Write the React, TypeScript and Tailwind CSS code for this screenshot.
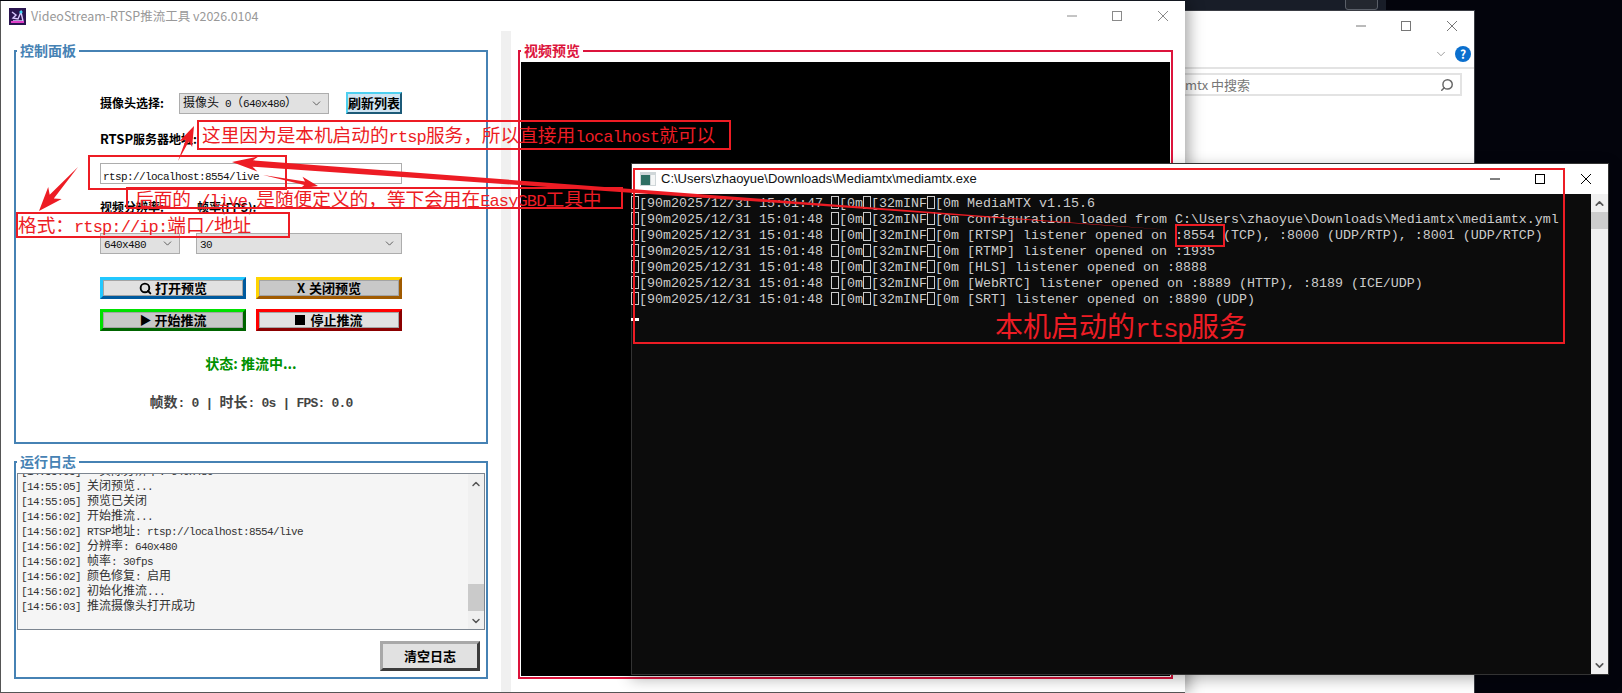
import { Search, ChevronDown, ChevronUp } from 'lucide-react'

const sans = "font-['Noto_Sans_CJK_SC','Liberation_Sans',sans-serif]"

const logLines = [
  '[14:55:05]   实际分辨率: 640x480',
  '[14:55:05] 关闭预览...',
  '[14:55:05] 预览已关闭',
  '[14:56:02] 开始推流...',
  '[14:56:02] RTSP地址: rtsp://localhost:8554/live',
  '[14:56:02] 分辨率: 640x480',
  '[14:56:02] 帧率: 30fps',
  '[14:56:02] 颜色修复: 启用',
  '[14:56:02] 初始化推流...',
  '[14:56:03] 推流摄像头打开成功',
]

const consoleLines = [
  ['2025/12/31 15:01:47', 'MediaMTX v1.15.6'],
  ['2025/12/31 15:01:48', 'configuration loaded from C:\\Users\\zhaoyue\\Downloads\\Mediamtx\\mediamtx.yml'],
  ['2025/12/31 15:01:48', '[RTSP] listener opened on :8554 (TCP), :8000 (UDP/RTP), :8001 (UDP/RTCP)'],
  ['2025/12/31 15:01:48', '[RTMP] listener opened on :1935'],
  ['2025/12/31 15:01:48', '[HLS] listener opened on :8888'],
  ['2025/12/31 15:01:48', '[WebRTC] listener opened on :8889 (HTTP), :8189 (ICE/UDP)'],
  ['2025/12/31 15:01:48', '[SRT] listener opened on :8890 (UDP)'],
]

// latin runs get a mono face so they sit at half the width of the CJK cells
function Mixed({ text, latin }: { text: string; latin: string }) {
  const parts = text.split(/([\x00-\x7f]+)/).filter(Boolean)
  return (
    <>
      {parts.map((p, i) =>
        /^[\x00-\x7f]/.test(p) ? (
          <span key={i} className={latin}>
            {p}
          </span>
        ) : (
          <span key={i}>{p}</span>
        ),
      )}
    </>
  )
}

const mono12 = "font-['Liberation_Mono',monospace] text-[11px] tracking-[-0.6px]"
const mono14 = "font-['Liberation_Mono',monospace] text-[13px] tracking-[-0.8px]"
const mono19 = "font-['Liberation_Mono',monospace] text-[17px] tracking-[-0.87px]"
const mono28 = "font-['Liberation_Mono',monospace] text-[26px] tracking-[-1.6px]"

function Combo({ text, className }: { text: string; className: string }) {
  return (
    <div className={`flex items-center justify-between bg-[#e1e1e1] border border-[#adadad] pl-[3px] pr-[5px] text-[12px] text-[#111] ${className}`}>
      <span className="whitespace-pre">
        <Mixed text={text} latin={mono12} />
      </span>
      <ChevronDown size={13} strokeWidth={1.5} className="text-[#444]" />
    </div>
  )
}

function Bevel({ children, className }: { children: React.ReactNode; className: string }) {
  return (
    <div className={`flex items-center justify-center gap-[3px] border-[3px] h-[22px] shadow-[inset_0_0_0_1px_#a4a4a4] text-[13px] font-bold text-black ${className}`}>
      {children}
    </div>
  )
}

function GroupLabel({ text, className }: { text: string; className: string }) {
  return <div className={`absolute left-px -top-[11px] bg-white px-[3px] h-[18px] leading-[18px] text-[14px] font-bold ${className}`}>{text}</div>
}

function WinControls({ tone, className }: { tone: string; className: string }) {
  return (
    <div className={`flex items-center ${className}`}>
      <svg width="12" height="12" viewBox="0 0 12 12" className={tone}>
        <path d="M1 6h10" stroke="currentColor" fill="none" />
      </svg>
      <svg width="12" height="12" viewBox="0 0 12 12" className={`ml-[33px] ${tone}`}>
        <rect x="1.5" y="1.5" width="9" height="9" stroke="currentColor" fill="none" />
      </svg>
      <svg width="12" height="12" viewBox="0 0 12 12" className={`ml-[34px] ${tone}`}>
        <path d="M1 1l10 10M11 1L1 11" stroke="currentColor" fill="none" />
      </svg>
    </div>
  )
}

function arrow(x1: number, y1: number, x2: number, y2: number, head: number, headW: number, shaft: number) {
  const len = Math.hypot(x2 - x1, y2 - y1)
  const ux = (x2 - x1) / len
  const uy = (y2 - y1) / len
  const nx = -uy
  const ny = ux
  const bx = x2 - ux * head
  const by = y2 - uy * head
  const nb = x2 - ux * head * 0.8
  const mb = y2 - uy * head * 0.8
  const pts = [
    [x1, y1],
    [nb + (nx * shaft) / 2, mb + (ny * shaft) / 2],
    [bx + (nx * headW) / 2, by + (ny * headW) / 2],
    [x2, y2],
    [bx - (nx * headW) / 2, by - (ny * headW) / 2],
    [nb - (nx * shaft) / 2, mb - (ny * shaft) / 2],
  ]
  return pts.map((p) => p.map((v) => v.toFixed(1)).join(',')).join(' ')
}

function Annotations() {
  const box = 'absolute border-[2px] border-[#ed1c24]'
  const note = 'absolute whitespace-pre text-[#ed1c24] text-[18.67px] leading-[24px]'
  return (
    <>
      <div className={`${box} left-[197px] top-[120px] w-[534px] h-[30px]`} />
      <div className={`${note} left-[202px] top-[122px]`}>
        <Mixed text="这里因为是本机启动的rtsp服务，所以直接用localhost就可以" latin={mono19} />
      </div>

      <div className={`${box} left-[88px] top-[155px] w-[199px] h-[35px]`} />

      <div className={`${box} left-[126px] top-[187px] w-[497px] h-[22px]`} />
      <div className={`${note} left-[135px] top-[186px]`}>
        <Mixed text="后面的 /live 是随便定义的，等下会用在EasyGBD工具中" latin={mono19} />
      </div>

      <div className={`${box} left-[16px] top-[212px] w-[274px] h-[26px]`} />
      <div className={`${note} left-[18px] top-[212px]`}>
        <Mixed text="格式：rtsp://ip:端口/地址" latin={mono19} />
      </div>

      <div className={`${box} left-[633px] top-[168px] w-[932px] h-[176px]`} />
      <div className={`${box} left-[1175px] top-[224px] w-[50px] h-[23px]`} />
      <div className="absolute left-[995px] top-[307px] whitespace-pre text-[#ed1c24] text-[28px] leading-[36px]">
        <Mixed text="本机启动的rtsp服务" latin={mono28} />
      </div>

      <svg width="1622" height="693" className="absolute left-0 top-0 pointer-events-none">
        <g fill="#ed1c24">
          <polygon points={arrow(178, 161, 194, 126, 20, 14, 3.5)} />
          <polygon points={arrow(78, 167, 39, 211, 24, 18, 5.5)} />
          <polygon points={arrow(1171, 230, 232, 162, 26, 15, 6.5)} />
          <polygon points={arrow(263, 175, 318, 186, 17, 12, 3.5)} />
        </g>
      </svg>
    </>
  )
}

function ConsoleBox() {
  return <span className="inline-block w-[8px] h-[13px] border border-[#ccc] align-[-2px]" />
}

export default function App() {
  return (
    <div className={`relative w-[1622px] h-[693px] overflow-hidden bg-[#03040c] ${sans}`}>
      {/* desktop strip behind the windows */}
      <div className="absolute left-[1000px] top-0 w-[386px] h-[12px] bg-[#181d28]" />
      <div className="absolute left-[1345px] -top-[6px] w-[33px] h-[16px] rounded-[3px] border border-[#5a5f68] bg-[#23272f]" />

      {/* explorer window */}
      <div className="absolute left-[1100px] top-[10px] w-[375px] h-[684px] bg-white border-r border-t border-[#3a3d44]">
        <div className="flex justify-end pt-[9px] pr-[16px]">
          <WinControls tone="text-[#777]" className="" />
        </div>
        <div className="flex justify-end items-center mt-[12px] pr-[3px] h-[20px] gap-[7px]">
          <ChevronDown size={14} strokeWidth={1.4} className="text-[#888]" />
          <div className="w-[16px] h-[16px] rounded-full bg-[#0a6fce] text-white text-[12px] font-bold leading-[16px] text-center">?</div>
        </div>
        <div className="mt-[3px] h-[2px] bg-[#e3e3e3]" />
        <div className="flex items-center justify-between mt-[4px] ml-[85px] mr-[12px] h-[23px] border-2 border-l-0 border-[#e3e3e3] pr-[6px]">
          <span className="text-[13px] text-[#777] whitespace-pre">mtx 中搜索</span>
          <Search size={14} strokeWidth={2.5} className="text-[#666] -scale-x-100" />
        </div>
      </div>

      {/* main app window */}
      <div className="absolute left-0 top-[1px] w-[1185px] h-[692px] flex flex-col bg-white border-l border-b border-[#555] shadow-[4px_0_14px_rgba(0,0,0,0.35)]">
        <div className="flex items-center h-[30px] pl-[8px] shrink-0">
          <svg width="17" height="17" viewBox="0 0 17 17">
            <rect width="17" height="17" fill="#2a1550" />
            <path d="M3 4l4 3-3 3 5 1 3-7 2 9H4" stroke="#d9c8ff" strokeWidth="1.4" fill="none" />
            <circle cx="12" cy="4" r="1.6" fill="#41d9f5" />
            <rect x="2" y="13" width="13" height="2" fill="#e040c8" />
          </svg>
          <span className="ml-[5px] text-[12.5px] text-[#999]">VideoStream-RTSP推流工具 v2026.0104</span>
          <WinControls tone="text-[#8a8a8a]" className="ml-auto mr-[16px]" />
        </div>

        <div className="flex flex-1 min-h-0">
          {/* left column */}
          <div className="ml-[13px] w-[474px] pt-[19px] flex flex-col gap-[17px]">
            <div className="relative h-[394px] border-2 border-[#4682b4] pl-[84px]">
              <GroupLabel text="控制面板" className="text-[#4682b4]" />
              <div className="w-[302px] pt-[40px]">
                <div className="flex items-center h-[22px]">
                  <span className="w-[79px] text-[12px] font-bold text-black">摄像头选择:</span>
                  <Combo text="摄像头 0（640x480）" className="w-[150px] h-[21px]" />
                  <div className="ml-[17px] w-[56px] h-[22px] flex items-center justify-center border-[2px] border-t-[#4fd0f0] border-l-[#4fd0f0] border-b-[#1c5a78] border-r-[#1c5a78] bg-[#cfe4f2] text-[13px] font-bold text-black">
                    刷新列表
                  </div>
                </div>
                <div className="mt-[16px] h-[18px] leading-[18px] text-[12px] font-bold text-black">
                  <span className="text-[13px]">RTSP</span>服务器地址:
                </div>
                <div className="mt-[15px] h-[21px] border border-[#adadad] bg-white pl-[2px] leading-[19px] text-[#111]">
                  <span className={mono12}>rtsp://localhost:8554/live</span>
                </div>
                <div className="mt-[14px] flex h-[18px] leading-[18px] text-[12px] font-bold text-black">
                  <span className="w-[97px]">视频分辨率:</span>
                  <span>帧率(FPS):</span>
                </div>
                <div className="mt-[17px] flex gap-[16px]">
                  <Combo text="640x480" className="w-[80px] h-[21px]" />
                  <Combo text="30" className="w-[206px] h-[21px]" />
                </div>
                <div className="mt-[23px] grid grid-cols-2 gap-x-[10px] gap-y-[10px]">
                  <Bevel className="border-t-[#22c8ff] border-l-[#22c8ff] border-b-[#005a9e] border-r-[#005a9e] bg-[#e1e1e1]">
                    <Search size={13} strokeWidth={3.5} /> 打开预览
                  </Bevel>
                  <Bevel className="border-t-[#ffd400] border-l-[#ffd400] border-b-[#a05a00] border-r-[#a05a00] bg-[#c8c8c8]">
                    <span className="mr-[1px]">X</span>关闭预览
                  </Bevel>
                  <Bevel className="border-t-[#00e000] border-l-[#00e000] border-b-[#006400] border-r-[#006400] bg-[#c8c8c8]">
                    <span className="text-[12px]">▶</span>开始推流
                  </Bevel>
                  <Bevel className="border-t-[#ff0000] border-l-[#ff0000] border-b-[#8b0000] border-r-[#8b0000] bg-[#e1e1e1]">
                    <span className="w-[10px] h-[10px] bg-black mr-[2px]" />停止推流
                  </Bevel>
                </div>
                <div className="mt-[22px] h-[20px] leading-[20px] text-center text-[14px] font-bold text-[#009000]">状态: 推流中...</div>
                <div className="mt-[18px] h-[20px] leading-[20px] text-center text-[14px] font-bold text-[#444] whitespace-pre">
                  <Mixed text="帧数: 0 | 时长: 0s | FPS: 0.0" latin={mono14} />
                </div>
              </div>
            </div>

            <div className="relative h-[218px] border-2 border-[#4682b4] px-px pt-[10px]">
              <GroupLabel text="运行日志" className="text-[#4682b4]" />
              <div className="flex h-[157px] border border-[#7c8590] bg-[#f5f5f5] overflow-hidden">
                <div className="flex-1 pl-[3px] -mt-[12px] text-[12px] text-[#333]">
                  {logLines.map((l, i) => (
                    <div key={i} className="h-[15px] leading-[15px] whitespace-pre">
                      <Mixed text={l} latin={mono12} />
                    </div>
                  ))}
                </div>
                <div className="w-[16px] bg-[#f0f0f0] flex flex-col items-center">
                  <ChevronUp size={12} strokeWidth={3} className="text-[#555] mt-[4px]" />
                  <div className="mt-[94px] w-full h-[27px] bg-[#cacaca]" />
                  <ChevronDown size={12} strokeWidth={3} className="text-[#555] mt-[4px]" />
                </div>
              </div>
              <div className="flex justify-end mt-[11px] pr-[5px]">
                <div className="w-[100px] h-[30px] flex items-center justify-center border-[3px] border-t-[#a8a8a8] border-l-[#a8a8a8] border-b-[#3c3c3c] border-r-[#3c3c3c] bg-[#e1e1e1] text-[13px] font-bold text-black">
                  清空日志
                </div>
              </div>
            </div>
          </div>

          {/* splitter */}
          <div className="ml-[13px] w-[10px] bg-[#f0f0f0]" />

          {/* preview */}
          <div className="ml-[7px] w-[655px] pt-[19px]">
            <div className="relative h-[629px] border-2 border-[#dc143c] p-px pt-[10px]">
              <GroupLabel text="视频预览" className="text-[#dc143c]" />
              <div className="h-full bg-black" />
            </div>
          </div>
        </div>
      </div>

      {/* console window */}
      <div className="absolute left-[631px] top-[163px] w-[978px] h-[512px] flex flex-col bg-[#0c0c0c] border border-[#333] shadow-[0_4px_14px_rgba(0,0,0,0.3)]">
        <div className="flex items-center h-[30px] bg-white pl-[8px] shrink-0">
          <svg width="16" height="14" viewBox="0 0 16 14">
            <rect width="16" height="14" fill="#cfd6d8" />
            <rect x="1" y="3" width="9" height="10" fill="#2f6f63" />
            <rect x="11" y="3" width="4" height="10" fill="#f4f6f6" />
          </svg>
          <span className="ml-[5px] text-[13px] text-[#111] font-['Liberation_Sans',sans-serif]">C:\Users\zhaoyue\Downloads\Mediamtx\mediamtx.exe</span>
          <WinControls tone="text-black" className="ml-auto mr-[16px]" />
        </div>
        <div className="flex flex-1 min-h-0">
          <div className="flex-1 pt-[2px] font-['Liberation_Mono',monospace] text-[13.33px] text-[#cccccc] -ml-px">
            {consoleLines.map((l, i) => (
              <div key={i} className="h-[16px] leading-[16px] whitespace-pre">
                <ConsoleBox />[90m{l[0]} <ConsoleBox />[0m<ConsoleBox />[32mINF<ConsoleBox />[0m {l[1]}
              </div>
            ))}
            <div className="mt-[10px] w-[8px] h-[3px] bg-white" />
          </div>
          <div className="w-[17px] bg-[#f0f0f0] flex flex-col items-center">
            <ChevronUp size={13} strokeWidth={3} className="text-[#555] mt-[3px]" />
            <div className="mt-[2px] w-full h-[17px] bg-[#cdcdcd]" />
            <ChevronDown size={13} strokeWidth={3} className="text-[#555] mt-auto mb-[2px]" />
          </div>
        </div>
      </div>

      <Annotations />
    </div>
  )
}
